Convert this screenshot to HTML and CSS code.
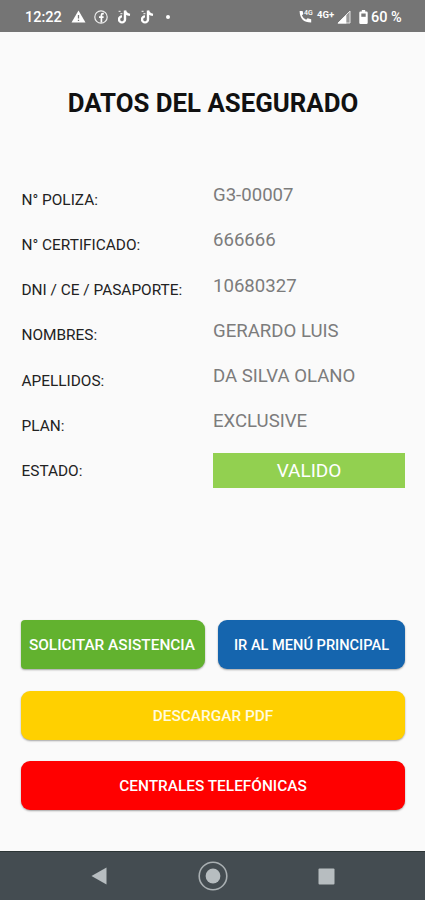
FILE: index.html
```html
<!DOCTYPE html>
<html lang="es">
<head>
    <meta charset="UTF-8">
    <meta name="viewport" content="width=device-width, initial-scale=1.0">
    <title>Datos del asegurado</title>
    <link rel="stylesheet" href="styles.css">
</head>
<body>
    <div class="screen">
        <div class="status-bar">
            <span class="clock">12:22</span>
            <svg class="icon-alert" width="15" height="13" viewBox="0 0 15 13">
                <path d="M7.5 0.5L14.5 12.5H0.5Z" fill="#fff"/>
                <path d="M7.5 5v3.6M7.5 9.8v1.3" stroke="#777" stroke-width="1.3"/>
            </svg>
            <svg class="icon-fb" width="14" height="14" viewBox="0 0 14 14">
                <circle cx="7" cy="7" r="6.2" fill="none" stroke="#eee" stroke-width="1.2"/>
                <path d="M9.8 3.6H8.9Q7.4 3.6 7.4 5.2V12.5M5 7.2h4.6" fill="none" stroke="#fff" stroke-width="1.7"/>
            </svg>
            <svg class="icon-note" width="13" height="14" viewBox="0 0 13 14">
                <path d="M7 .5v8.9a3 3 0 1 1-3-3M7 .5q.5 3.8 5 4.4" fill="none" stroke="#fff" stroke-width="2.4"/>
                <path d="M.6 1.4h2M2.4 3.6h2" stroke="#ddd" stroke-width="1.3"/>
            </svg>
            <svg class="icon-note" width="13" height="14" viewBox="0 0 13 14">
                <path d="M7 .5v8.9a3 3 0 1 1-3-3M7 .5q.5 3.8 5 4.4" fill="none" stroke="#fff" stroke-width="2.4"/>
                <path d="M.6 1.4h2M2.4 3.6h2" stroke="#ddd" stroke-width="1.3"/>
            </svg>
            <span class="dot"></span>

            <div class="status-right">
                <span class="call">
                    <svg width="13" height="13" viewBox="0 0 13 13">
                        <path d="M.6 1H3.6l.7 3-1.4 1.5q1.4 3 4.2 4.3L8.6 8.3l3.6.9v3.3Q1 12.6.6 1Z" fill="#fff"/>
                    </svg>
                    <span class="call-net">4G</span>
                </span>
                <span class="net">4G+</span>
                <svg class="icon-signal" width="14" height="14" viewBox="0 0 14 14">
                    <path d="M13 1V13H1Z" fill="#999" stroke="#e4e4e4" stroke-width="1"/>
                    <path d="M9.3 4.7V13.5H.5Z" fill="#fff"/>
                </svg>
                <svg class="icon-battery" width="9" height="14" viewBox="0 0 9 14">
                    <path d="M2.8 0h3.4v1.5H7.5q1.2 0 1.2 1.2v10q0 1.2-1.2 1.2h-6Q.3 13.9.3 12.7v-10Q.3 1.5 1.5 1.5h1.3Z" fill="#fff"/>
                    <path d="M2.3 3.5h4.4v3.3H2.3Z" fill="#777"/>
                </svg>
                <span class="percent">60 %</span>
            </div>
        </div>

        <div class="content">
            <h1>DATOS DEL ASEGURADO</h1>

            <div class="datos">
                <div class="row">
                    <span class="label">N° POLIZA:</span>
                    <span class="value">G3-00007</span>
                </div>
                <div class="row">
                    <span class="label">N° CERTIFICADO:</span>
                    <span class="value">666666</span>
                </div>
                <div class="row">
                    <span class="label">DNI / CE / PASAPORTE:</span>
                    <span class="value">10680327</span>
                </div>
                <div class="row">
                    <span class="label">NOMBRES:</span>
                    <span class="value">GERARDO LUIS</span>
                </div>
                <div class="row">
                    <span class="label">APELLIDOS:</span>
                    <span class="value">DA SILVA OLANO</span>
                </div>
                <div class="row">
                    <span class="label">PLAN:</span>
                    <span class="value">EXCLUSIVE</span>
                </div>
                <div class="row">
                    <span class="label">ESTADO:</span>
                    <span class="value estado">VALIDO</span>
                </div>
            </div>

            <div class="botones">
                <button type="button" class="btn btn-green">SOLICITAR ASISTENCIA</button>
                <button type="button" class="btn btn-blue">IR AL MENÚ PRINCIPAL</button>
                <button type="button" class="btn btn-yellow">DESCARGAR PDF</button>
                <button type="button" class="btn btn-red">CENTRALES TELEFÓNICAS</button>
            </div>
        </div>

        <div class="nav-bar">
            <svg width="16" height="18" viewBox="0 0 16 18">
                <path d="M15.5.5v17L.5 9Z" fill="#b7bdc0"/>
            </svg>
            <svg width="30" height="30" viewBox="0 0 30 30">
                <circle cx="15" cy="15" r="13.8" fill="none" stroke="#a9afb2" stroke-width="1.6"/>
                <circle cx="15" cy="15" r="7.4" fill="#b7bdc0"/>
            </svg>
            <svg width="17" height="17" viewBox="0 0 17 17">
                <rect x=".5" y=".5" width="16" height="16" rx="1" fill="#b7bdc0"/>
            </svg>
        </div>
    </div>
</body>
</html>
```

FILE: styles.css
```css
body {
    margin: 0;
    font-family: Roboto, Arial, sans-serif;
    background-color: #fafafa;
}

.screen {
    display: flex;
    flex-direction: column;
    width: 425px;
    height: 900px;
    overflow: hidden;
}

/* status bar */
.status-bar {
    display: flex;
    align-items: center;
    height: 32px;
    padding: 1px 23px 0 25px;
    box-sizing: border-box;
    background-color: #757575;
    color: #fff;
    flex-shrink: 0;
}

.clock {
    width: 46px;
    padding-top: 1px;
    font-size: 14.5px;
    font-weight: 500;
}

.icon-alert {
    margin-right: 8px;
}

.icon-fb {
    margin-right: 10px;
}

.icon-note {
    margin-right: 10px;
}

.dot {
    width: 4px;
    height: 4px;
    margin-left: 2px;
    border-radius: 50%;
    background-color: #fff;
}

.status-right {
    display: flex;
    align-items: center;
    margin-left: auto;
}

.call {
    position: relative;
    display: flex;
    width: 18px;
}

.call-net {
    position: absolute;
    left: 5px;
    top: -1px;
    font-size: 7px;
    font-weight: 500;
}

.net {
    width: 20px;
    margin-top: -5px;
    font-size: 9.5px;
    font-weight: 700;
}

.icon-signal {
    margin-right: 8px;
}

.icon-battery {
    margin-right: 3px;
}

.percent {
    width: 31px;
    padding-top: 1px;
    font-size: 14.5px;
    font-weight: 500;
    white-space: nowrap;
}

/* datos */
.content {
    flex: 1;
    padding: 0 20px 0 21px;
}

h1 {
    margin: 55px 0 0;
    font-size: 25.8px;
    line-height: 32px;
    font-weight: 700;
    text-align: center;
    color: #111;
}

.datos {
    margin-top: 62.5px;
}

.row {
    display: grid;
    grid-template-columns: 192px 192px;
    height: 45.3px;
}

.label {
    padding: 8px 0 0 .5px;
    font-size: 15.4px;
    line-height: 20px;
    color: #222;
}

.value {
    padding-top: 1.5px;
    font-size: 18.6px;
    line-height: 24px;
    color: #7c7c7c;
}

.estado {
    height: 35px;
    padding-top: 0;
    font-size: 19px;
    line-height: 36px;
    text-align: center;
    color: #fff;
    background-color: #92d050;
}

.row:last-child {
    height: 35px;
}

/* botones */
.botones {
    display: grid;
    grid-template-columns: 184px 187px;
    column-gap: 13px;
    row-gap: 21px;
    margin-top: 132px;
}

.btn {
    height: 49px;
    padding: 1px 0 0;
    border: none;
    border-radius: 9px;
    font-family: inherit;
    font-size: 15.4px;
    font-weight: 500;
    color: #fff;
    white-space: nowrap;
    box-shadow: 0 1px 2px rgba(0, 0, 0, 0.35);
    cursor: pointer;
}

.btn-green {
    padding-right: 2px;
    background-color: #62b22f;
    border-radius: 4px 9px 9px 4px;
}

.btn-blue {
    font-size: 14.6px;
    background-color: #1565ae;
}

.btn-yellow {
    grid-column: 1 / 3;
    margin-top: .5px;
    background-color: #ffd000;
    color: #fffbe0;
}

.btn-red {
    grid-column: 1 / 3;
    background-color: #ff0000;
}

/* nav bar */
.nav-bar {
    display: flex;
    align-items: center;
    justify-content: space-between;
    height: 49px;
    padding: 0 90px 0 91px;
    box-sizing: border-box;
    background-color: #444c51;
    border-top: 1px solid #2c3536;
    flex-shrink: 0;
}
```
